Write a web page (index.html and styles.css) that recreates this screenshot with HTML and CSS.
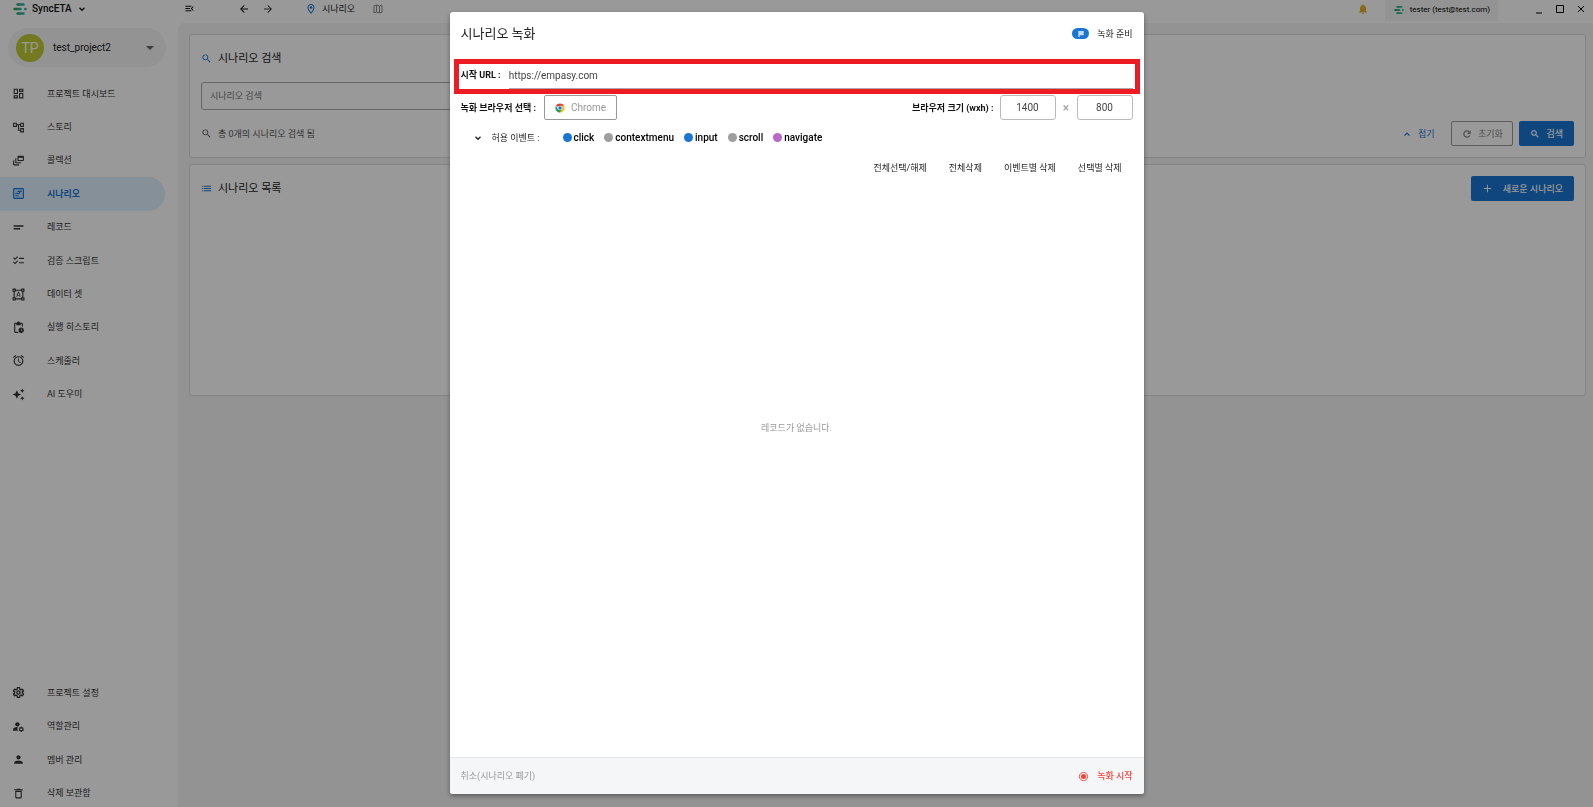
FILE: index.html
```html
<!DOCTYPE html>
<html lang="ko">
<head>
<meta charset="utf-8">
<meta name="viewport" content="width=device-width, initial-scale=1">
<title>SyncETA - 시나리오</title>
<link rel="stylesheet" href="styles.css">
</head>
<body>
<svg class="sprite" aria-hidden="true">
  <symbol id="i-logo" viewBox="0 0 28 28"><g fill="none" stroke-width="5" stroke-linecap="round"><path stroke="#3d9e62" d="M9 5h3M3 14h6M9 23h3"/><path stroke="#2bb39a" d="M12 5h9M11 14h4M12 23h9"/><path stroke="#2bb39a" d="M24.500 14h.5"/></g></symbol>
  <symbol id="i-down" viewBox="0 0 24 24"><path fill="none" stroke="currentColor" stroke-width="3" d="M6 9l6 6 6-6"/></symbol>
  <symbol id="i-up" viewBox="0 0 24 24"><path fill="none" stroke="currentColor" stroke-width="3" d="M6 16l6-6 6 6"/></symbol>
  <symbol id="i-drop" viewBox="0 0 24 24"><path d="M6 9l6 6 6-6z"/></symbol>
  <symbol id="i-menu" viewBox="0 0 24 24"><path d="M3 18h13v-2H3v2zm0-5h10v-2H3v2zm0-7v2h13V6H3zm18 9.590L17.420 12 21 8.410 19.590 7l-5 5 5 5L21 15.590z"/></symbol>
  <symbol id="i-back" viewBox="0 0 24 24"><path d="M20 11H7.830l5.590-5.590L12 4l-8 8 8 8 1.410-1.410L7.830 13H20v-2z"/></symbol>
  <symbol id="i-forward" viewBox="0 0 24 24"><path d="M12 4l-1.410 1.410L16.170 11H4v2h12.170l-5.580 5.590L12 20l8-8z"/></symbol>
  <symbol id="i-place" viewBox="0 0 24 24"><path d="M12 2C8.130 2 5 5.130 5 9c0 5.250 7 13 7 13s7-7.750 7-13c0-3.870-3.130-7-7-7zM7 9c0-2.760 2.240-5 5-5s5 2.240 5 5c0 2.880-2.880 7.190-5 9.880C9.920 16.210 7 11.850 7 9z"/><circle cx="12" cy="9" r="2.500"/></symbol>
  <symbol id="i-map" viewBox="0 0 24 24"><path fill="none" stroke="currentColor" stroke-width="2" d="M4 5.500l5-1.500 6 2 5-2v14.500l-5 1.500-6-2-5 2zM9 4v14M15 6v14"/></symbol>
  <symbol id="i-bell" viewBox="0 0 24 24"><path d="M12 22c1.100 0 2-.9 2-2h-4c0 1.100.9 2 2 2zm6-6v-5c0-3.070-1.630-5.640-4.500-6.320V4c0-.83-.67-1.500-1.500-1.500s-1.500.67-1.500 1.500v.68C7.640 5.360 6 7.920 6 11v5l-2 2v1h16v-1l-2-2z"/></symbol>
  <symbol id="i-dash" viewBox="0 0 24 24"><path d="M19 5v2h-4V5h4M9 5v6H5V5h4m10 8v6h-4v-6h4M9 17v2H5v-2h4M21 3h-8v6h8V3zM11 3H3v10h8V3zm10 8h-8v10h8V11zm-10 4H3v6h8v-6z"/></symbol>
  <symbol id="i-tree" viewBox="0 0 24 24"><path d="M22 11V3h-7v3H9V3H2v8h7V8h2v10h4v3h7v-8h-7v3h-2V8h2v3h7zM7 9H4V5h3v4zm10 6h3v4h-3v-4zm0-10h3v4h-3V5z"/></symbol>
  <symbol id="i-feed" viewBox="0 0 24 24"><path d="M8 8H6v7c0 1.100.9 2 2 2h9v-2H8V8zM20 3h-8c-1.100 0-2 .9-2 2v6c0 1.100.9 2 2 2h8c1.100 0 2-.9 2-2V5c0-1.100-.9-2-2-2zm0 8h-8V7h8v4zM4 12H2v7c0 1.100.9 2 2 2h9v-2H4v-7z"/></symbol>
  <symbol id="i-scenario" viewBox="0 0 24 24"><g fill="none" stroke="currentColor" stroke-width="2"><rect x="3" y="3" width="18" height="18" rx="1" fill="currentColor" fill-opacity=".15"/><path d="M10 8h8M6 12h8M14 12v-4M6 16h6"/></g></symbol>
  <symbol id="i-short" viewBox="0 0 24 24"><path d="M3 8h18v2.500H3zM3 13h12v2.500H3z"/></symbol>
  <symbol id="i-check" viewBox="0 0 24 24"><path d="M22 7h-9v2h9V7zm0 8h-9v2h9v-2zM5.540 11 2 7.460l1.410-1.410 2.120 2.120 4.240-4.240 1.410 1.410L5.540 11zm0 8L2 15.460l1.410-1.410 2.120 2.120 4.240-4.240 1.410 1.410L5.540 19z"/></symbol>
  <symbol id="i-shapes" viewBox="0 0 24 24"><path d="M23 7V1h-6v2H7V1H1v6h2v10H1v6h6v-2h10v2h6v-6h-2V7h2zM3 3h2v2H3V3zm2 18H3v-2h2v2zm12-2H7v-2H5V7h2V5h10v2h2v10h-2v2zm4 2h-2v-2h2v2zM19 5V3h2v2h-2zm-5.270 9h-3.490l-.73 2H7.890l3.400-9h1.400l3.410 9h-1.630l-.74-2zm-3.040-1.260h2.610L12 8.910l-1.310 3.830z"/></symbol>
  <symbol id="i-pending" viewBox="0 0 24 24"><path d="M17 12c-2.760 0-5 2.240-5 5s2.240 5 5 5 5-2.240 5-5-2.240-5-5-5zm1.650 7.350L16.500 17.200V14h1v2.790l1.850 1.850-.7.710zM18 3h-3.180C14.400 1.840 13.300 1 12 1s-2.400.84-2.820 2H6c-1.100 0-2 .9-2 2v15c0 1.100.9 2 2 2h6.110c-.59-.57-1.070-1.250-1.420-2H6V5h2v3h8V5h2v5.080c.71.1 1.380.31 2 .6V5c0-1.100-.9-2-2-2z"/></symbol>
  <symbol id="i-alarm" viewBox="0 0 24 24"><path d="M22 5.720l-4.600-3.860-1.290 1.530 4.600 3.860L22 5.720zM7.880 3.390L6.600 1.860 2 5.710l1.290 1.530 4.590-3.850zM12.500 8H11v6l4.750 2.850.75-1.230-4-2.370V8zM12 4c-4.970 0-9 4.030-9 9s4.020 9 9 9c4.970 0 9-4.030 9-9s-4.030-9-9-9zm0 16c-3.870 0-7-3.130-7-7s3.130-7 7-7 7 3.130 7 7-3.130 7-7 7z"/></symbol>
  <symbol id="i-spark" viewBox="0 0 24 24"><path d="M19 9l1.250-2.750L23 5l-2.750-1.250L19 1l-1.250 2.750L15 5l2.750 1.250L19 9zm-7.500.5L9 4 6.500 9.500 1 12l5.500 2.500L9 20l2.500-5.500L17 12l-5.500-2.500zM19 15l-1.250 2.750L15 19l2.750 1.250L19 23l1.250-2.750L23 19l-2.750-1.250L19 15z"/></symbol>
  <symbol id="i-gear" viewBox="0 0 24 24"><g fill="none" stroke="currentColor" stroke-width="2.500"><path stroke-linejoin="round" d="M10 3h4l.5 3 2 1.100 2.800-1.100 2 3.400-2.300 1.900v1.400l2.300 1.900-2 3.400-2.800-1.100-2 1.100-.5 3h-4l-.5-3-2-1.100-2.800 1.100-2-3.400L5 12.700v-1.400L2.700 9.400l2-3.400 2.800 1.100 2-1.100z"/><circle cx="12" cy="12" r="3"/></g></symbol>
  <symbol id="i-role" viewBox="0 0 24 24"><circle cx="10" cy="8" r="4"/><path d="M10.670 13.020C10.450 13.010 10.230 13 10 13c-2.420 0-4.680.67-6.610 1.820C2.510 15.340 2 16.320 2 17.350V20h9.260c-.79-1.130-1.260-2.510-1.260-4 0-1.070.25-2.070.67-2.980z"/><circle cx="17" cy="17" r="3" fill="none" stroke="currentColor" stroke-width="2"/><path fill="none" stroke="currentColor" stroke-width="2" d="M17 12v2M17 20v2M12.700 14.500l1.700 1M19.600 18.500l1.700 1M12.700 19.500l1.700-1M19.600 15.500l1.700-1"/></symbol>
  <symbol id="i-person" viewBox="0 0 24 24"><path d="M12 12c2.210 0 4-1.790 4-4s-1.790-4-4-4-4 1.790-4 4 1.790 4 4 4zm0 2c-2.670 0-8 1.340-8 4v2h16v-2c0-2.660-5.330-4-8-4z"/></symbol>
  <symbol id="i-trash" viewBox="0 0 24 24"><path d="M6 19c0 1.100.9 2 2 2h8c1.100 0 2-.9 2-2V7H6v12zM8 9h8v10H8V9zm7.500-5-1-1h-5l-1 1H4v2h16V4z"/></symbol>
  <symbol id="i-search" viewBox="0 0 24 24"><path d="M15.500 14h-.79l-.28-.27C15.410 12.590 16 11.110 16 9.500 16 5.910 13.090 3 9.500 3S3 5.910 3 9.500 5.910 16 9.500 16c1.610 0 3.090-.59 4.230-1.570l.27.28v.79l5 4.990L20.490 19l-4.990-5zm-6 0C7.010 14 5 11.990 5 9.500S7.010 5 9.500 5 14 7.010 14 9.500 11.990 14 9.500 14z"/></symbol>
  <symbol id="i-list" viewBox="0 0 24 24"><path d="M2 13h2v-2H2v2zm0 5h2v-2H2v2zM2 8h2V6H2v2zm4 5h16v-2H6v2zm0 5h16v-2H6v2zM6 6v2h16V6H6z"/></symbol>
  <symbol id="i-reload" viewBox="0 0 24 24"><path fill="none" stroke="currentColor" stroke-width="3" d="M18.500 15.500A7.500 7.500 0 1 1 17.500 7"/><path d="M21 3v9h-9z"/></symbol>
  <symbol id="i-plus" viewBox="0 0 24 24"><path d="M20 13h-7v7h-2v-7H4v-2h7V4h2v7h7z"/></symbol>
  <symbol id="i-flag" viewBox="0 0 24 24"><path fill-opacity=".75" d="M4 3h16v13H8v5H4z"/></symbol>
  <symbol id="i-radio" viewBox="0 0 24 24"><circle cx="12" cy="12" r="9" fill="none" stroke="currentColor" stroke-width="2"/><circle cx="12" cy="12" r="5.500"/></symbol>
  <symbol id="i-chrome" viewBox="0 0 24 24"><path fill="#e33b2e" d="M12 12L2.500 6.500a11 11 0 0 1 19 0z"/><path fill="#fbc116" d="M12 12V6.500h9.500A11 11 0 0 1 12 23z"/><path fill="#269955" d="M12 12L7 15 2.500 6.500A11 11 0 0 0 12 23l4.500-8.500z"/><circle cx="12" cy="12" r="5.500" fill="#fff"/><circle cx="12" cy="12" r="4.200" fill="#1a73e8"/></symbol>
</svg>

<div class="app">
  <header class="topbar">
    <button class="brand" type="button"><svg class="icon logo"><use href="#i-logo"/></svg>SyncETA<svg class="icon icon-xs"><use href="#i-down"/></svg></button>
    <div class="history">
      <button type="button" aria-label="메뉴 접기" class="fold"><svg class="icon icon-sm"><use href="#i-menu"/></svg></button>
      <button type="button" aria-label="뒤로"><svg class="icon"><use href="#i-back"/></svg></button>
      <button type="button" aria-label="앞으로" class="dim"><svg class="icon"><use href="#i-forward"/></svg></button>
    </div>
    <a class="crumb" href="#"><svg class="icon blue"><use href="#i-place"/></svg>시나리오</a>
    <button type="button" aria-label="사이트맵" class="faint"><svg class="icon"><use href="#i-map"/></svg></button>
    <div class="account">
      <button type="button" aria-label="알림" class="bell"><svg class="icon"><use href="#i-bell"/></svg></button>
      <button type="button" class="user"><svg class="icon icon-xs"><use href="#i-logo"/></svg>tester (test@test.com)</button>
      <div class="window-controls">
        <button type="button" aria-label="최소화"><svg viewBox="0 0 10 10"><path d="M2 9h6"/></svg></button>
        <button type="button" aria-label="최대화"><svg viewBox="0 0 10 10"><path d="M1.500 1.500h7v7h-7z"/></svg></button>
        <button type="button" aria-label="닫기"><svg viewBox="0 0 10 10"><path d="M2 2l6 6M8 2l-6 6"/></svg></button>
      </div>
    </div>
  </header>

  <aside class="sidebar">
    <button class="project" type="button"><span class="avatar">TP</span><span class="project-name">test_project2</span><svg class="icon icon-lg"><use href="#i-drop"/></svg></button>
    <nav class="nav nav-main">
      <a href="#"><svg class="icon"><use href="#i-dash"/></svg>프로젝트 대시보드</a>
      <a href="#"><svg class="icon"><use href="#i-tree"/></svg>스토리</a>
      <a href="#"><svg class="icon"><use href="#i-feed"/></svg>콜렉션</a>
      <a href="#" class="active" aria-current="page"><svg class="icon"><use href="#i-scenario"/></svg>시나리오</a>
      <a href="#"><svg class="icon"><use href="#i-short"/></svg>레코드</a>
      <a href="#"><svg class="icon"><use href="#i-check"/></svg>검증 스크립트</a>
      <a href="#"><svg class="icon"><use href="#i-shapes"/></svg>데이터 셋</a>
      <a href="#"><svg class="icon"><use href="#i-pending"/></svg>실행 히스토리</a>
      <a href="#"><svg class="icon"><use href="#i-alarm"/></svg>스케줄러</a>
      <a href="#"><svg class="icon"><use href="#i-spark"/></svg>AI 도우미</a>
    </nav>
    <nav class="nav nav-admin">
      <a href="#"><svg class="icon"><use href="#i-gear"/></svg>프로젝트 설정</a>
      <a href="#"><svg class="icon"><use href="#i-role"/></svg>역할관리</a>
      <a href="#"><svg class="icon"><use href="#i-person"/></svg>멤버 관리</a>
      <a href="#"><svg class="icon"><use href="#i-trash"/></svg>삭제 보관함</a>
    </nav>
  </aside>

  <main class="content">
    <section class="card">
      <h2 class="card-title"><svg class="icon icon-sm blue"><use href="#i-search"/></svg>시나리오 검색</h2>
      <input class="search-field" type="text" placeholder="시나리오 검색" aria-label="시나리오 검색">
      <div class="card-row">
        <p class="result"><svg class="icon icon-sm"><use href="#i-search"/></svg>총 0개의 시나리오 검색 됨</p>
        <div class="buttons">
          <button type="button" class="btn btn-text"><svg class="icon icon-xs"><use href="#i-up"/></svg>접기</button>
          <button type="button" class="btn btn-outline"><svg class="icon icon-xs"><use href="#i-reload"/></svg>초기화</button>
          <button type="button" class="btn btn-fill"><svg class="icon icon-xs bold"><use href="#i-search"/></svg>검색</button>
        </div>
      </div>
    </section>
    <section class="card card-list">
      <div class="card-row">
        <h2 class="card-title"><svg class="icon icon-sm blue"><use href="#i-list"/></svg>시나리오 목록</h2>
        <button type="button" class="btn btn-fill btn-new"><svg class="icon icon-sm"><use href="#i-plus"/></svg>새로운 시나리오</button>
      </div>
    </section>
  </main>
</div>

<div class="backdrop">
  <div class="dialog" role="dialog" aria-modal="true" aria-labelledby="dialog-title">
    <header class="dialog-head">
      <h1 id="dialog-title">시나리오 녹화</h1>
      <p class="status"><span class="status-badge"><svg><use href="#i-flag"/></svg></span>녹화 준비</p>
    </header>
    <div class="url-row">
      <label for="url">시작 URL :</label>
      <input id="url" type="text" value="https://empasy.com">
      <div class="highlight"></div>
    </div>
    <div class="browser-row">
      <span class="label">녹화 브라우저 선택 :</span>
      <button type="button" class="browser"><svg class="icon icon-xs"><use href="#i-chrome"/></svg>Chrome</button>
      <label class="size-label" for="width">브라우저 크기 (wxh) :</label>
      <input id="width" class="size" type="text" value="1400">
      <span class="times">×</span>
      <input class="size" type="text" value="800" aria-label="브라우저 높이">
    </div>
    <div class="events">
      <button type="button" class="events-toggle"><svg class="icon icon-xs"><use href="#i-down"/></svg>허용 이벤트 :</button>
      <ul>
        <li class="on">click</li>
        <li>contextmenu</li>
        <li class="on">input</li>
        <li>scroll</li>
        <li class="nav-event">navigate</li>
      </ul>
    </div>
    <div class="actions">
      <button type="button">전체선택/해제</button>
      <button type="button">전체삭제</button>
      <button type="button">이벤트별 삭제</button>
      <button type="button">선택별 삭제</button>
    </div>
    <div class="empty">레코드가 없습니다.</div>
    <footer class="dialog-foot">
      <button type="button" class="cancel">취소(시나리오 폐기)</button>
      <button type="button" class="record"><svg class="icon icon-sm"><use href="#i-radio"/></svg>녹화 시작</button>
    </footer>
  </div>
</div>
</body>
</html>
```
FILE: styles.css
```css
* { box-sizing: border-box; }

body {
  margin: 0;
  font: 9px/12px Roboto, "Noto Sans CJK KR", sans-serif;
  color: #222;
  background: #fff;
}

h1, h2, p, ul { margin: 0; padding: 0; }
ul { list-style: none; }
a { color: inherit; text-decoration: none; }
button, input { font: inherit; color: inherit; }
button { margin: 0; padding: 0; border: 0; background: none; white-space: nowrap; }
svg { flex: none; fill: currentColor; }
.sprite { position: absolute; width: 0; height: 0; }
.icon { width: 12px; height: 12px; display: block; }
.icon-xs { width: 10px; height: 10px; }
.icon-sm { width: 11px; height: 11px; }
.icon-lg { width: 16px; height: 16px; }
.blue { color: #1976d2; }

.app {
  display: grid;
  grid-template-columns: 178px 1fr;
  grid-template-rows: 23px 1fr;
  height: 100vh;
  overflow: hidden;
}

/* Top bar */
.topbar {
  grid-column: 1 / -1;
  display: flex;
  align-items: center;
  padding: 0 7px 6px 13px;
}
.brand { display: flex; align-items: center; gap: 5px; width: 171px; font-size: 10px; font-weight: 500; color: #111; }
.logo { width: 14px; height: 14px; }
.history { display: flex; gap: 12px; width: 121px; color: #111; }
.fold { margin-right: 31px; }
.dim { color: #444; }
.crumb { display: flex; align-items: center; gap: 5px; margin-right: 17px; }
.faint { color: #888; }
.account { display: flex; align-items: center; margin-left: auto; }
.bell { margin-right: 16px; color: #e6b02e; }
.user {
  display: flex; align-items: center; gap: 6px;
  height: 22px; margin: -3px 36px -5px 0; padding: 0 8px 0 9px;
  background: #f5f5f5; color: #000; font-size: 8px; font-weight: 400;
}
.window-controls { display: flex; gap: 11px; color: #000; }
.window-controls button { width: 10px; height: 10px; }
.window-controls svg { display: block; width: 10px; height: 10px; fill: none; stroke: currentColor; }

/* Sidebar */
.sidebar { display: flex; flex-direction: column; min-height: 0; padding: 5px 12px 0 0; }
.project {
  display: flex; align-items: center; gap: 9px;
  flex: none; height: 39px; margin: 0 0 10px 8px; padding: 0 8px;
  border-radius: 20px; background: #f5f5f5; text-align: left;
}
.avatar {
  display: grid; place-items: center; width: 28px; height: 28px;
  border-radius: 50%; background: #c0ca33; color: #fff; font-size: 14px;
}
.project-name { flex: 1; font-size: 10px; }
.project .icon { color: #666; }
.nav { display: grid; grid-auto-rows: 1fr; flex: none; color: #333; }
.nav-main { height: 334px; }
.nav-admin { height: 134px; margin: auto 0 -3px; }
.nav a { display: flex; align-items: center; gap: 22px; padding-left: 12px; margin-right: 1px; }
.nav .icon { width: 13px; height: 13px; }
.nav .active { border-radius: 0 17px 17px 0; background: #dff0ff; color: #1976d2; font-weight: 700; }

/* Page content */
.content {
  display: flex; flex-direction: column; gap: 6px;
  padding: 11px 7px 0 11px;
  border-top-left-radius: 6px;
  background: #f5f5f5;
}
.card { padding: 11px; border: 1px solid #ddd; border-radius: 3px; background: #fff; }
.card-list { height: 232px; }
.card-title { display: flex; align-items: center; gap: 6px; height: 25px; font-size: 11px; font-weight: 400; }
.search-field {
  display: block; width: 60%; height: 28px; margin: 11px 0; padding: 0 8px;
  border: 1px solid #aaa; border-radius: 3px; background: #fff;
}
.search-field::placeholder { color: #777; }
.card-row { display: flex; align-items: center; justify-content: space-between; }
.result { display: flex; align-items: center; gap: 6px; color: #555; }
.buttons { display: flex; gap: 6px; }
.btn { display: flex; align-items: center; justify-content: center; gap: 6px; height: 25px; padding: 0 11px; border-radius: 2px; }
.btn-text { color: #1976d2; }
.btn-outline { width: 62px; border: 1px solid #999; color: #888; }
.btn-fill { background: #1976d2; color: #fff; font-weight: 500; }
.btn-new { gap: 10px; }
.bold { stroke: currentColor; }

/* Recording dialog */
.backdrop {
  position: fixed; inset: 0;
  display: flex; justify-content: center;
  padding: 12px 0 13px;
  background: rgba(0, 0, 0, .4);
}
.dialog {
  display: flex; flex-direction: column;
  width: 694px; max-width: 96vw;
  border-radius: 3px;
  background: #fff;
  box-shadow: 0 2px 5px rgba(0, 0, 0, .4);
  overflow: hidden;
}
.dialog-head { display: flex; align-items: center; justify-content: space-between; height: 47px; padding: 0 11px 4px; flex: none; }
.dialog-head h1 { font-size: 13px; line-height: 18px; font-weight: 400; }
.status { display: flex; align-items: center; gap: 8px; }
.status-badge { display: grid; place-items: center; width: 17px; height: 11px; border-radius: 6px; background: #1976d2; color: #fff; }
.status-badge svg { width: 8px; height: 8px; }
.url-row { position: relative; display: flex; align-items: center; gap: 8px; height: 35px; padding: 5px 11px; flex: none; }
.url-row label, .browser-row label, .label { font-weight: 700; color: #111; white-space: nowrap; }
.url-row label { padding-bottom: 3px; }
.url-row input {
  flex: 1; min-width: 0; height: 25px; padding: 0 0 2px;
  border: 0; border-bottom: 1px solid #aaa; font-size: 10px; color: #444;
}
.highlight { position: absolute; inset: 0 4px; border: 5px solid #ed1c24; pointer-events: none; }
.browser-row { display: flex; align-items: center; height: 25px; margin-top: 1px; padding: 0 11px; flex: none; }
.browser {
  display: flex; align-items: center; justify-content: center; gap: 6px;
  width: 73px; height: 25px; margin-left: 8px;
  border: 1px solid #999; border-radius: 2px; color: #999; font-size: 10px;
}
.size-label { margin-left: auto; }
.size {
  width: 56px; height: 25px; padding: 0; margin-left: 6px;
  border: 1px solid #bbb; border-radius: 3px; text-align: center; font-size: 10px; color: #444;
}
.times { width: 15px; text-align: center; padding-left: 6px; color: #999; font-size: 12px; }
.events { display: flex; align-items: center; gap: 23px; height: 35px; padding: 0 23px; flex: none; }
.events-toggle { display: flex; align-items: center; gap: 9px; }
.events ul { display: flex; gap: 10px; font-size: 10px; font-weight: 500; color: #000; }
.events li { display: flex; align-items: center; gap: 2px; }
.events li::before { content: ""; width: 9px; height: 9px; border-radius: 50%; background: #9e9e9e; }
.events .on::before { background: #1976d2; }
.events .nav-event::before { background: #ba68c8; }
.actions { display: flex; justify-content: flex-end; gap: 22px; height: 26px; padding: 0 22px; flex: none; }
.empty { flex: 1; display: grid; place-items: center; padding-bottom: 82px; color: #999; }
.dialog-foot {
  display: flex; align-items: center; justify-content: space-between;
  height: 37px; padding: 0 11px; flex: none;
  border-top: 1px solid #e3e7ea; background: #f5f6f8;
}
.cancel { color: #999; }
.record { display: flex; align-items: center; gap: 8px; color: #f44336; font-weight: 500; }
```
